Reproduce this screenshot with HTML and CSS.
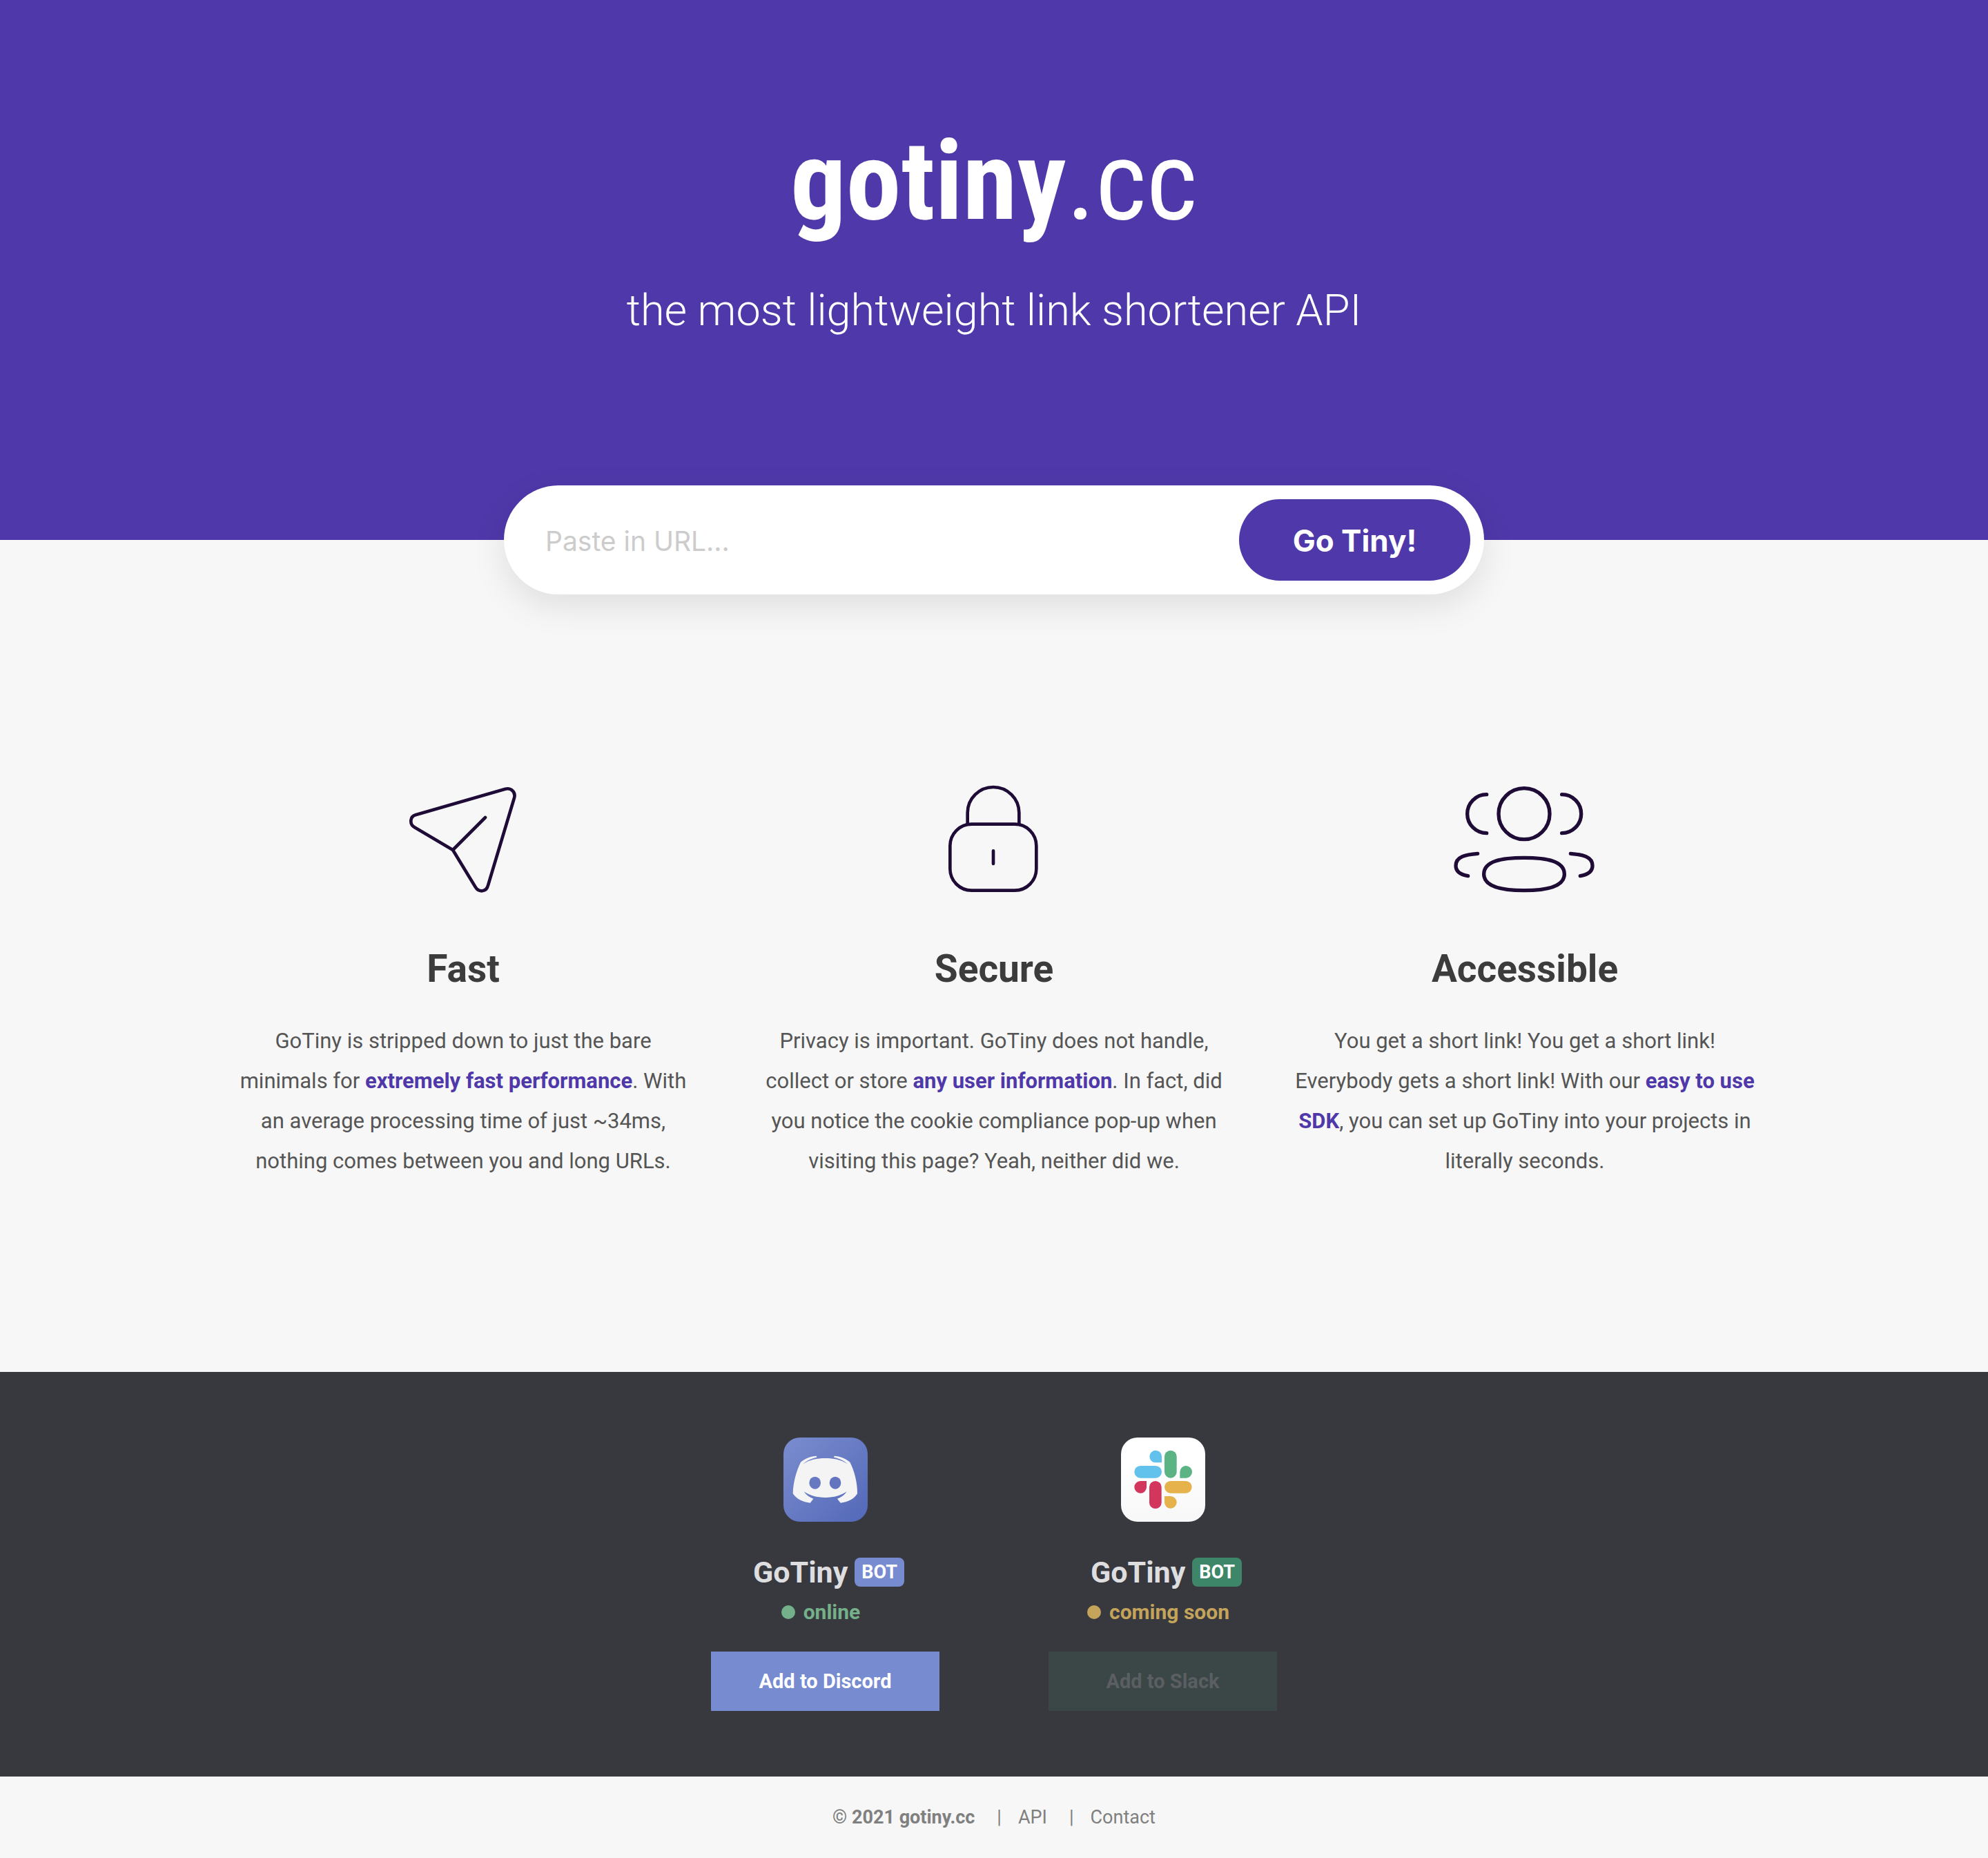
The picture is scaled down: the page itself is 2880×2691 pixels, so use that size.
FILE: index.html
```html
<!DOCTYPE html>
<html lang="en">
<head>
<meta charset="utf-8">
<meta name="viewport" content="width=device-width, initial-scale=1">
<title>gotiny.cc</title>
<link rel="stylesheet" href="styles.css">
</head>
<body>
<header class="hero">
  <h1 class="hero-title"><strong>gotiny</strong>.cc</h1>
  <p class="hero-tagline">the most lightweight link shortener API</p>
</header>

<main>
  <form class="shortener">
    <input class="shortener-input" type="text" aria-label="URL" placeholder="Paste in URL...">
    <button class="shortener-button" type="button">Go Tiny!</button>
  </form>

  <section class="features">
    <article class="feature">
      <svg class="feature-icon" viewBox="-27 60 720 510" aria-hidden="true">
        <path d="M126 211 L516 98 C542 92 562 112 555 137 L441 517 C434 547 400 548 386 524 L288 363 L122 265 C98 250 102 218 126 211 Z M288 363 L429 222"/>
      </svg>
      <h2 class="feature-title">Fast</h2>
      <p class="feature-text">GoTiny is stripped down to just the bare minimals for <strong>extremely fast performance</strong>. With an average processing time of just ~34ms, nothing comes between you and long URLs.</p>
    </article>
    <article class="feature">
      <svg class="feature-icon" viewBox="-60 60 720 510" aria-hidden="true">
        <path d="M185 250 V202 A112 112 0 0 1 409 202 V250 M297 367 V423"/>
        <rect x="109" y="251" width="375" height="288" rx="94"/>
      </svg>
      <h2 class="feature-title">Secure</h2>
      <p class="feature-text">Privacy is important. GoTiny does not handle, collect or store <strong>any user information</strong>. In fact, did you notice the cookie compliance pop-up when visiting this page? Yeah, neither did we.</p>
    </article>
    <article class="feature">
      <svg class="feature-icon feature-icon-bold" viewBox="27 60 720 510" aria-hidden="true">
        <circle cx="384" cy="206" r="111"/>
        <path d="M221 122 A84 84 0 0 0 221 290 M548 122 A84 84 0 0 1 548 290"/>
        <path d="M182 379 C130 383 87 392 87 431 C87 458 112 471 140 476 M586 379 C638 383 681 392 681 431 C681 458 656 471 628 476"/>
        <path d="M384 397 C480 397 559 410 559 468 C559 522 480 539 384 539 C288 539 209 522 209 468 C209 410 288 397 384 397 Z"/>
      </svg>
      <h2 class="feature-title">Accessible</h2>
      <p class="feature-text">You get a short link! You get a short link! Everybody gets a short link! With our <strong>easy to use SDK</strong>, you can set up GoTiny into your projects in literally seconds.</p>
    </article>
  </section>

  <section class="bots">
    <article class="bot">
      <svg class="bot-logo" viewBox="405 97 366 366" role="img" aria-label="Discord">
        <defs>
          <linearGradient id="discord-fill" x1="0" y1="0" x2="1" y2="1">
            <stop offset="0" stop-color="#7b8dcf"/>
            <stop offset="1" stop-color="#5368b8"/>
          </linearGradient>
        </defs>
        <rect x="405" y="97" width="366" height="366" rx="72" fill="url(#discord-fill)"/>
        <path fill="#f4f4f4" d="M587 187 C550 187 520 193 490 212 C508 196 530 187 550 183 L548 177 C525 178 500 187 480 204 C462 240 447 290 446 341 C462 365 490 378 521 381 L535 363 C517 357 504 347 494 332 C520 349 550 358 587 358 C624 358 654 349 680 332 C670 347 657 357 639 363 L653 381 C684 378 712 365 726 341 C727 290 712 240 694 204 C674 187 649 178 626 177 L624 183 C644 187 666 196 684 212 C654 193 624 187 587 187 Z"/>
        <ellipse cx="542" cy="294" rx="25" ry="27" fill="#6779c1"/>
        <ellipse cx="630" cy="294" rx="25" ry="27" fill="#6375be"/>
      </svg>
      <h3 class="bot-name">GoTiny<span class="badge">BOT</span></h3>
      <p class="bot-status bot-status-online">online</p>
      <button class="bot-button" type="button">Add to Discord</button>
    </article>
    <article class="bot">
      <svg class="bot-logo" viewBox="400 97 366 366" role="img" aria-label="Slack">
        <defs>
          <linearGradient id="slack-fill" x1="0" y1="0" x2="0" y2="1">
            <stop offset="0.3" stop-color="#ffffff"/>
            <stop offset="1" stop-color="#f7f7f8"/>
          </linearGradient>
        </defs>
        <rect x="400" y="97" width="366" height="366" rx="72" fill="url(#slack-fill)"/>
        <g fill="#62c2ec">
          <rect x="458" y="220" width="119" height="53" rx="26.500"/>
          <path d="M577 206 H550 A26.500 26.500 0 1 1 577 180 Z"/>
        </g>
        <g fill="#5cb383">
          <rect x="589" y="153" width="53" height="120" rx="26.500"/>
          <path d="M656 273 V246 A26.500 26.500 0 1 1 682 273 Z"/>
        </g>
        <g fill="#e5b24c">
          <rect x="589" y="286" width="119" height="53" rx="26.500"/>
          <path d="M589 352 H616 A26.500 26.500 0 1 1 589 379 Z"/>
        </g>
        <g fill="#d2365c">
          <rect x="523" y="286" width="53" height="120" rx="26.500"/>
          <path d="M511 286 V313 A26.500 26.500 0 1 1 484 286 Z"/>
        </g>
      </svg>
      <h3 class="bot-name">GoTiny<span class="badge badge-green">BOT</span></h3>
      <p class="bot-status bot-status-soon">coming soon</p>
      <button class="bot-button bot-button-green" type="button" disabled>Add to Slack</button>
    </article>
  </section>
</main>

<footer class="footer">
  <strong>© 2021 gotiny.cc</strong>
  <nav class="footer-nav">
    <a class="footer-link" href="#api">API</a>
    <a class="footer-link" href="#contact">Contact</a>
  </nav>
</footer>
</body>
</html>
```
FILE: styles.css
```css
:root {
  --purple: #4f38a9;
  --light: #f7f7f7;
  --dark: #38393e;
  --blurple: #768bd0;
  --green: #3e866a;
}

* {
  box-sizing: border-box;
}

body,
h1,
h2,
h3,
p {
  margin: 0;
}

body {
  background: var(--light);
  color: #555;
  font-family: Roboto, "Liberation Sans", sans-serif;
  font-size: 31px;
}

.hero {
  padding: 169px 40px 292px;
  background: var(--purple);
  color: #fff;
  text-align: center;
}

.hero-title {
  font-family: "Roboto Condensed", Roboto, sans-serif;
  font-size: 160px;
  font-weight: 400;
  line-height: 188px;
}

.hero-title strong {
  font-weight: 700;
}

.hero-tagline {
  margin-top: 53px;
  font-size: 63px;
  font-weight: 300;
  line-height: 80px;
}

.shortener {
  position: relative;
  display: flex;
  max-width: 1420px;
  height: 158px;
  margin: -79px auto 0;
  padding: 20px;
  border-radius: 79px;
  background: #fff;
  box-shadow: 0 16px 50px rgba(0, 0, 0, 0.1);
}

.shortener-input {
  flex: 1;
  min-width: 0;
  padding: 2px 40px 0;
  border: 0;
  background: transparent;
  color: #444;
  font: 400 39px Inter, "Liberation Sans", sans-serif;
  outline: 0;
}

.shortener-input::placeholder {
  color: #ccc;
}

.shortener-button {
  width: 335px;
  padding: 2px 0 0;
  border: 0;
  border-radius: 59px;
  background: var(--purple);
  color: #fff;
  font: 700 44px Inter, "Liberation Sans", sans-serif;
}

.features {
  display: grid;
  grid-template-columns: repeat(3, 1fr);
  gap: 94px;
  max-width: 2293px;
  margin: 0 auto;
  padding: 269px 40px 276px;
  text-align: center;
}

.feature-icon {
  display: block;
  width: 240px;
  height: 170px;
  margin: 0 auto;
  fill: none;
  stroke: #1e0c37;
  stroke-width: 14;
  stroke-linecap: round;
  stroke-linejoin: round;
}

.feature-icon-bold {
  stroke-width: 16;
}

.feature-title {
  margin-top: 70px;
  color: #3c3c3c;
  font-size: 55px;
  font-weight: 700;
  line-height: 66px;
}

.feature-text {
  margin-top: 43px;
  line-height: 58px;
}

.feature-text strong {
  color: var(--purple);
}

.bots {
  display: flex;
  justify-content: center;
  gap: 158px;
  padding: 95px 40px;
  background: var(--dark);
}

.bot {
  display: flex;
  flex-direction: column;
  align-items: center;
  width: 331px;
}

.bot-logo {
  width: 122px;
  height: 122px;
}

.bot-name {
  display: flex;
  align-items: center;
  gap: 10px;
  margin: 48px -10px 0 0;
  color: #dedee0;
  font-size: 43px;
  font-weight: 700;
  line-height: 50px;
}

.badge {
  padding: 0 10px;
  border-radius: 8px;
  background: var(--blurple);
  color: #fff;
  font-size: 27px;
  line-height: 42px;
}

.badge-green {
  background: var(--green);
}

.bot-status {
  display: flex;
  align-items: center;
  gap: 12px;
  padding-right: 13px;
  margin-top: 15px;
  font-size: 30px;
  font-weight: 700;
  line-height: 36px;
}

.bot-status::before {
  width: 20px;
  height: 20px;
  border-radius: 50%;
  background: currentColor;
  content: "";
}

.bot-status-online {
  color: #74b08a;
}

.bot-status-soon {
  color: #c4a35a;
}

.bot-button {
  width: 100%;
  height: 86px;
  margin-top: 39px;
  border: 0;
  background: var(--blurple);
  color: #fff;
  font: 700 29px Roboto, "Liberation Sans", sans-serif;
}

.bot-button-green {
  background: #3a4746;
  color: #5b5e62;
}

.footer {
  display: flex;
  justify-content: center;
  padding: 42px 40px;
  color: #808080;
  font-size: 27px;
  line-height: 34px;
}

.footer-nav {
  display: flex;
}

.footer-link {
  margin-left: 32px;
  color: inherit;
  text-decoration: none;
}

.footer-link::before {
  margin-right: 24px;
  content: "|";
}
```
